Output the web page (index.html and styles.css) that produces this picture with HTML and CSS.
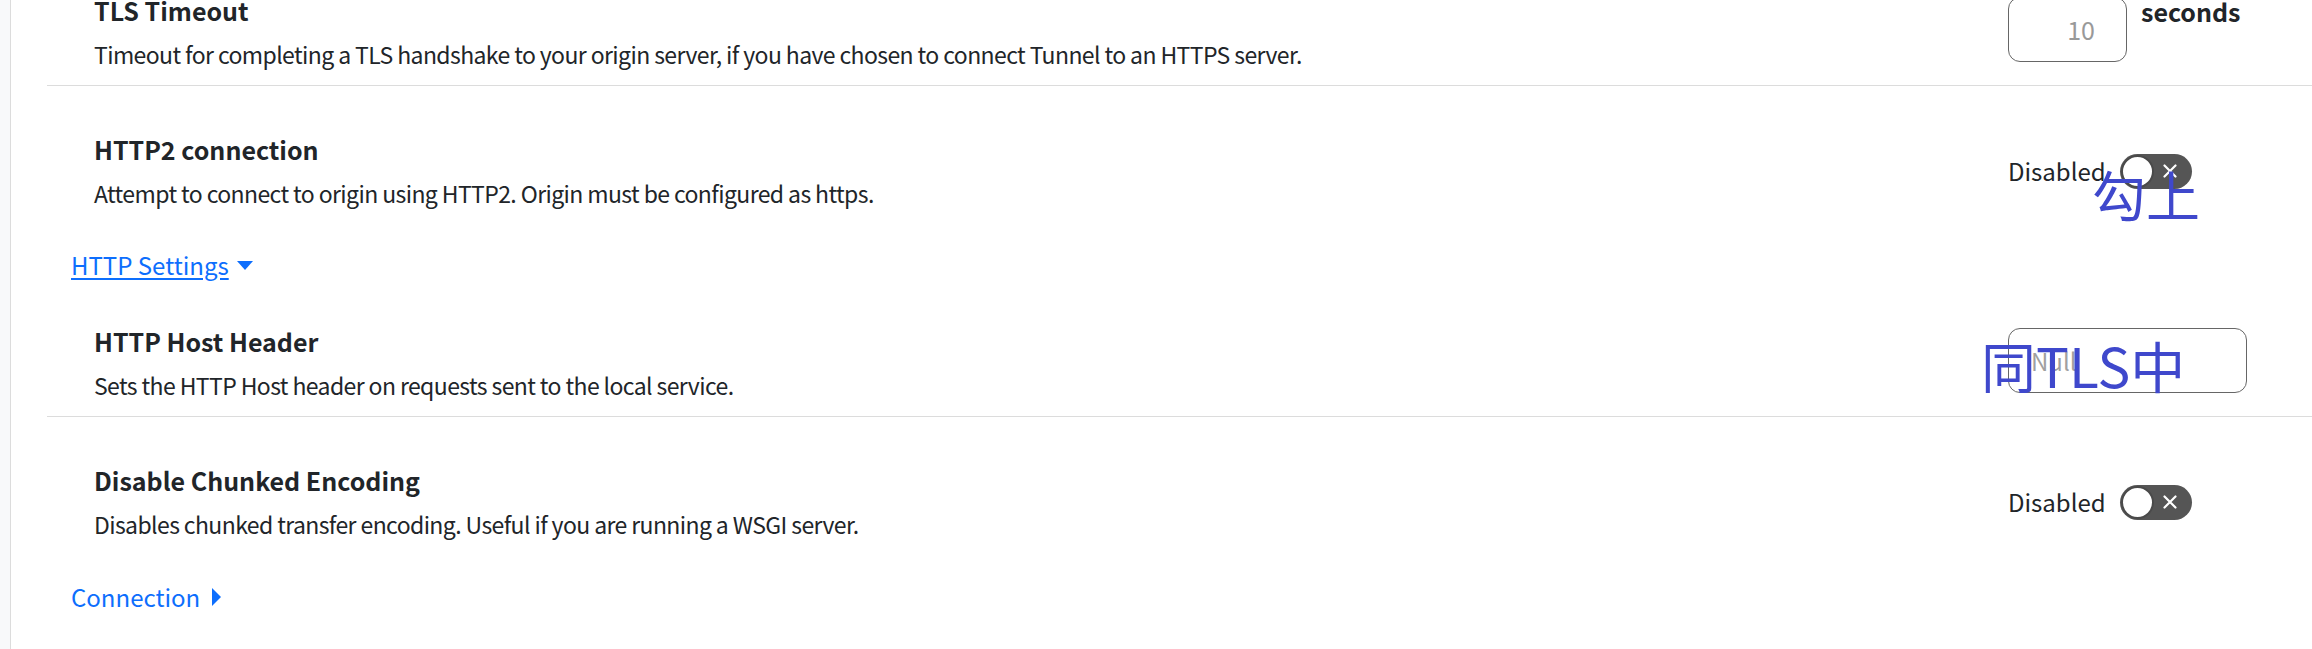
FILE: index.html
```html
<!DOCTYPE html>
<html lang="en">
<head>
<meta charset="utf-8">
<title>Tunnel settings</title>
<link rel="stylesheet" href="styles.css">
</head>
<body>
<div class="page">
  <div class="edge"></div>
  <main class="content">
    <div class="scroller">
      <section class="row divided">
        <div class="text">
          <div class="title">TLS Timeout</div>
          <div class="desc">Timeout for completing a TLS handshake to your origin server, if you have chosen to connect Tunnel to an HTTPS server.</div>
        </div>
        <div class="control control-input">
          <input class="num-input" type="text" value="10">
          <span class="unit">seconds</span>
        </div>
      </section>

      <section class="row">
        <div class="text">
          <div class="title">HTTP2 connection</div>
          <div class="desc">Attempt to connect to origin using HTTP2. Origin must be configured as https.</div>
        </div>
        <div class="control">
          <span class="switch-label">Disabled</span>
          <span class="switch">
            <span class="knob"></span>
            <svg class="cross" viewBox="0 0 14 14" width="14" height="14"><path d="M1.5 1.5 L12.5 12.5 M12.5 1.5 L1.5 12.5" stroke="#fff" stroke-width="2.2" stroke-linecap="round"/></svg>
          </span>
        </div>
      </section>

      <div class="section-link open"><a href="#">HTTP Settings</a><span class="caret-down"></span></div>

      <section class="row divided first">
        <div class="text">
          <div class="title">HTTP Host Header</div>
          <div class="desc">Sets the HTTP Host header on requests sent to the local service.</div>
        </div>
        <div class="control control-input">
          <input class="text-input" type="text" placeholder="Null">
        </div>
      </section>

      <section class="row">
        <div class="text">
          <div class="title">Disable Chunked Encoding</div>
          <div class="desc">Disables chunked transfer encoding. Useful if you are running a WSGI server.</div>
        </div>
        <div class="control">
          <span class="switch-label">Disabled</span>
          <span class="switch">
            <span class="knob"></span>
            <svg class="cross" viewBox="0 0 14 14" width="14" height="14"><path d="M1.5 1.5 L12.5 12.5 M12.5 1.5 L1.5 12.5" stroke="#fff" stroke-width="2.2" stroke-linecap="round"/></svg>
          </span>
        </div>
      </section>

      <div class="section-link closed"><span class="plain-link">Connection</span><span class="caret-right"></span></div>
    </div>
  </main>

  <div class="note note-check">勾上</div>
  <div class="note note-same">同TLS中</div>
</div>
</body>
</html>
```

FILE: styles.css
```css
html, body {
  margin: 0;
  padding: 0;
  background: #ffffff;
}

body {
  font-family: "Noto Sans CJK SC", "Noto Sans", sans-serif;
  color: #212529;
  font-size: 24px;
  overflow: hidden;
}

.page {
  position: relative;
  display: flex;
  width: 2312px;
  height: 649px;
  overflow: hidden;
}

.edge {
  width: 10px;
  flex: none;
  background: #f8f9fa;
  border-right: 1px solid #dcdcdc;
}

.content {
  flex: 1;
  min-width: 0;
}

.scroller {
  margin-top: -53px;
  padding-left: 36px;
}

.row {
  display: grid;
  grid-template-columns: 1fr 304px;
  align-items: center;
  padding: 45px 0 13px 47px;
}

.row.first {
  padding-top: 40px;
}

.row.divided {
  border-bottom: 1px solid #dcdcdc;
}

.title {
  font-weight: 700;
  font-size: 25px;
  line-height: 36px;
  margin-bottom: 8px;
  color: #212529;
}

.desc {
  font-size: 23px;
  letter-spacing: -0.6px;
  line-height: 36px;
  color: #212529;
}

.control {
  display: flex;
  align-items: center;
  gap: 14px;
}

.control-input {
  align-items: flex-start;
  padding-bottom: 6px;
}

.num-input,
.text-input {
  box-sizing: border-box;
  height: 65px;
  border: 1px solid #666666;
  border-radius: 12px;
  background: #fff;
  font-family: "Noto Sans CJK SC", "Noto Sans", sans-serif;
  font-size: 25px;
  color: #999999;
  outline: none;
  margin: 0;
}

.num-input {
  width: 119px;
  text-align: right;
  padding: 0 31px 0 8px;
}

.text-input {
  width: 239px;
  padding: 0 12px 0 22px;
  font-size: 24px;
}

.text-input::placeholder {
  color: #a0a0a0;
}

.unit {
  font-weight: 700;
  font-size: 25px;
  line-height: 36px;
  color: #212529;
  margin-top: -4px;
}

.switch-label {
  font-size: 24px;
  line-height: 36px;
}

.switch {
  position: relative;
  display: inline-flex;
  align-items: center;
  justify-content: flex-end;
  box-sizing: border-box;
  width: 72px;
  height: 35px;
  border-radius: 18px;
  background: #555555;
  padding-right: 15px;
}

.knob {
  position: absolute;
  left: 1px;
  top: 1px;
  width: 33px;
  height: 33px;
  box-sizing: border-box;
  border-radius: 50%;
  background: #ffffff;
  border: 2px solid #4a4a4a;
}

.cross {
  display: block;
}

.section-link {
  display: flex;
  align-items: center;
  gap: 8px;
  padding-left: 24px;
  margin-top: 23px;
  font-size: 24px;
  line-height: 36px;
  color: #0d6efd;
}

.section-link a {
  color: #0d6efd;
  text-decoration: underline;
  text-underline-offset: 3px;
}

.plain-link {
  color: #0d6efd;
}

.section-link.closed {
  margin-top: 24px;
}

.caret-down {
  width: 0;
  height: 0;
  border-left: 8px solid transparent;
  border-right: 8px solid transparent;
  border-top: 9px solid #0d6efd;
}

.caret-right {
  width: 0;
  height: 0;
  border-top: 9px solid transparent;
  border-bottom: 9px solid transparent;
  border-left: 9px solid #0d6efd;
  margin-left: 4px;
}

.note {
  position: absolute;
  font-family: "Noto Sans CJK SC", sans-serif;
  color: #3f48cc;
  line-height: 1;
  white-space: nowrap;
}

.note-check {
  left: 2092px;
  top: 167px;
  font-size: 54px;
}

.note-same {
  left: 1981px;
  top: 337px;
  font-size: 55px;
}
```
